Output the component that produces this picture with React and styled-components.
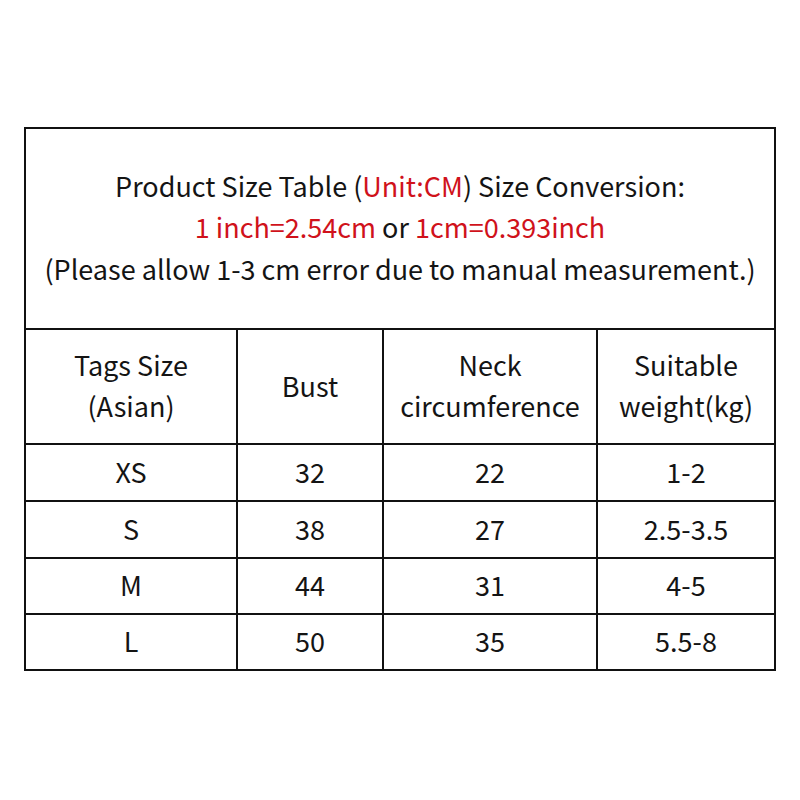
import styled, { createGlobalStyle } from 'styled-components';

const GlobalStyle = createGlobalStyle`
  html, body {
    margin: 0;
    padding: 0;
    background: #ffffff;
  }
  body {
    font-family: "Noto Sans CJK SC", "Noto Sans", sans-serif;
    color: #141414;
  }
`;

const sizes = [
  { tag: 'XS', bust: '32', neck: '22', weight: '1-2', h: 55 },
  { tag: 'S', bust: '38', neck: '27', weight: '2.5-3.5', h: 55 },
  { tag: 'M', bust: '44', neck: '31', weight: '4-5', h: 54 },
  { tag: 'L', bust: '50', neck: '35', weight: '5.5-8', h: 54 },
];

export default function App() {
  return (
    <Page>
      <GlobalStyle />
      <Table>
        <Title>
          <Line>
            Product Size Table (<Red>Unit:CM</Red>) Size Conversion:
          </Line>
          <Line>
            <Red>1 inch=2.54cm</Red> or <Red>1cm=0.393inch</Red>
          </Line>
          <Line>(Please allow 1-3 cm error due to manual measurement.)</Line>
        </Title>
        <Cell $h={113}>Tags Size<br />(Asian)</Cell>
        <Cell $h={113}>Bust</Cell>
        <Cell $h={113}>Neck<br />circumference</Cell>
        <Cell $h={113}>Suitable<br />weight(kg)</Cell>
        {sizes.map(row => [
          <Cell key={row.tag + 'a'} $h={row.h}>{row.tag}</Cell>,
          <Cell key={row.tag + 'b'} $h={row.h}>{row.bust}</Cell>,
          <Cell key={row.tag + 'c'} $h={row.h}>{row.neck}</Cell>,
          <Cell key={row.tag + 'd'} $h={row.h}>{row.weight}</Cell>,
        ])}
      </Table>
    </Page>
  );
}

const Page = styled.div`
  width: 800px;
  height: 800px;
  box-sizing: border-box;
  padding: 127px 24px 0;
`;

const Table = styled.div`
  display: grid;
  grid-template-columns: 210px 144px 212px 176px;
  gap: 2px;
  padding: 2px;
  width: 752px;
  box-sizing: border-box;
  background: #111;
`;

const Title = styled.div`
  grid-column: 1 / -1;
  height: 199px;
  box-sizing: border-box;
  padding-bottom: 3px;
  background: #fff;
  display: flex;
  flex-direction: column;
  align-items: center;
  justify-content: center;
  font-size: 27px;
  line-height: 41.5px;
`;

const Line = styled.div`
  white-space: nowrap;
`;

const Red = styled.span`
  color: #d0121b;
`;

const Cell = styled.div`
  height: ${p => p.$h}px;
  box-sizing: border-box;
  padding-bottom: 3px;
  background: #fff;
  display: flex;
  align-items: center;
  justify-content: center;
  text-align: center;
  font-size: 27px;
  line-height: 41px;
`;
